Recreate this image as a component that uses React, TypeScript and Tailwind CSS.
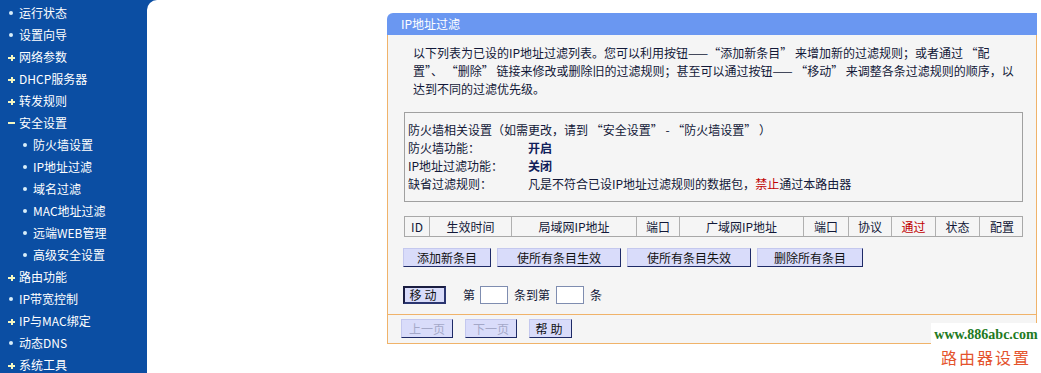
import type { ReactNode } from 'react'

type Mark = 'dot' | 'plus' | 'minus'

interface MenuItem {
  label: string
  mark: Mark
  sub?: boolean
}

const menu: MenuItem[] = [
  { label: '运行状态', mark: 'dot' },
  { label: '设置向导', mark: 'dot' },
  { label: '网络参数', mark: 'plus' },
  { label: 'DHCP服务器', mark: 'plus' },
  { label: '转发规则', mark: 'plus' },
  { label: '安全设置', mark: 'minus' },
  { label: '防火墙设置', mark: 'dot', sub: true },
  { label: 'IP地址过滤', mark: 'dot', sub: true },
  { label: '域名过滤', mark: 'dot', sub: true },
  { label: 'MAC地址过滤', mark: 'dot', sub: true },
  { label: '远端WEB管理', mark: 'dot', sub: true },
  { label: '高级安全设置', mark: 'dot', sub: true },
  { label: '路由功能', mark: 'plus' },
  { label: 'IP带宽控制', mark: 'dot' },
  { label: 'IP与MAC绑定', mark: 'plus' },
  { label: '动态DNS', mark: 'dot' },
  { label: '系统工具', mark: 'plus' },
]

// column widths of the rule table, they add up to the 619px box above it
const columns: { label: string; width: string; red?: boolean }[] = [
  { label: 'ID', width: 'w-[24px]' },
  { label: '生效时间', width: 'w-[82px]' },
  { label: '局域网IP地址', width: 'w-[125px]' },
  { label: '端口', width: 'w-[43px]' },
  { label: '广域网IP地址', width: 'w-[124px]' },
  { label: '端口', width: 'w-[45px]' },
  { label: '协议', width: 'w-[43px]' },
  { label: '通过', width: 'w-[44px]', red: true },
  { label: '状态', width: 'w-[44px]' },
  { label: '配置', width: 'w-[45px]' },
]

function Bullet({ mark }: { mark: Mark }) {
  if (mark === 'plus') {
    return (
      <span className="relative block h-[7px] w-[7px]">
        <span className="absolute left-0 top-[3px] h-[2px] w-[7px] bg-[#f4f6c0]" />
        <span className="absolute left-[2.5px] top-[1px] h-[6px] w-[2px] bg-[#f4f6c0]" />
      </span>
    )
  }
  if (mark === 'minus') {
    return <span className="block h-[2px] w-[7px] bg-[#f4f6c0]" />
  }
  return <span className="ml-[1px] block h-[4px] w-[4px] rounded-full bg-[#d8eefa]" />
}

function Sidebar() {
  return (
    <nav className="w-[147px] shrink-0 pt-[2px]">
      {menu.map((item) => (
        <div
          key={item.label}
          className={
            item.sub
              ? 'flex h-[22px] items-center pl-[22px] text-[12px] text-white'
              : 'flex h-[22px] items-center pl-[8px] text-[12px] text-white'
          }
        >
          <span className="flex w-[11px] items-center">
            <Bullet mark={item.mark} />
          </span>
          <span>{item.label}</span>
        </div>
      ))}
    </nav>
  )
}

function Btn({ children, width, disabled }: { children: ReactNode; width: string; disabled?: boolean }) {
  return (
    <button
      type="button"
      className={
        (disabled ? 'text-[#a4a8c8] ' : 'text-[#111] ') +
        width +
        ' h-[19px] border border-t-[#c4c8ee] border-l-[#c4c8ee] border-r-[#1e2a66] border-b-[#1e2a66] bg-[#d9dcfa] text-[12px] leading-[17px]'
      }
    >
      {children}
    </button>
  )
}

function SmallInput() {
  return <span className="block h-[18px] w-[28px] border border-[#7f8db0] bg-white" />
}

export default function App() {
  return (
    <div className="relative flex h-[373px] w-[1041px] overflow-hidden bg-[#0b4ea3] font-['Noto_Sans_CJK_SC',sans-serif]">
      <Sidebar />

      <main className="flex-1 rounded-tl-[10px] bg-white pl-[240px] pt-[13px]">
        <div className="w-[650px]">
          <div className="h-[22px] rounded-tl-[6px] bg-[#6a97f1] pl-[14px] text-[12px] leading-[22px] text-white">
            IP地址过滤
          </div>

          <div className="border-x border-b border-[#f0b36a] bg-[#f5f5f5] text-[12px] text-[#121838]">
            <p className="pl-[25px] pr-[10px] pt-[9px] leading-[18px]">
              以下列表为已设的IP地址过滤列表。您可以利用按钮——“添加新条目” 来增加新的过滤规则；或者通过 “配
              <br />
              置”、 “删除” 链接来修改或删除旧的过滤规则；甚至可以通过按钮—— “移动” 来调整各条过滤规则的顺序，以
              <br />
              达到不同的过滤优先级。
            </p>

            <div className="ml-[16px] mt-[14px] w-[619px] border border-[#a0a0a0] px-[3px] py-[8px] leading-[18px]">
              <div>防火墙相关设置（如需更改，请到 “安全设置” - “防火墙设置” ）</div>
              <div className="flex">
                <span className="w-[120px]">防火墙功能：</span>
                <span className="font-bold text-[#10205a]">开启</span>
              </div>
              <div className="flex">
                <span className="w-[120px]">IP地址过滤功能：</span>
                <span className="font-bold text-[#10205a]">关闭</span>
              </div>
              <div className="flex">
                <span className="w-[120px]">缺省过滤规则：</span>
                <span>
                  凡是不符合已设IP地址过滤规则的数据包，<span className="text-[#c00000]">禁止</span>通过本路由器
                </span>
              </div>
            </div>

            <div className="ml-[16px] mt-[14px] flex h-[21px] w-[619px] border border-[#a8a8a8]">
              {columns.map((c, i) => (
                <div
                  key={i}
                  className={
                    c.width +
                    (i > 0 ? ' border-l border-[#b0b0b0]' : '') +
                    (c.red ? ' text-[#c00000]' : '') +
                    ' shrink-0 text-center leading-[19px]'
                  }
                >
                  {c.label}
                </div>
              ))}
            </div>

            <div className="ml-[15px] mt-[11px] flex gap-[6px]">
              <Btn width="w-[88px]">添加新条目</Btn>
              <Btn width="w-[124px]">使所有条目生效</Btn>
              <Btn width="w-[124px]">使所有条目失效</Btn>
              <Btn width="w-[106px]">删除所有条目</Btn>
            </div>

            <div className="ml-[15px] mt-[19px] flex h-[18px] items-center">
              <button
                type="button"
                className="h-[18px] w-[43px] border-2 border-[#1a1d40] border-r-[#2a3570] border-b-[#2a3570] bg-[#d9dcfa] text-[12px] leading-[14px] tracking-[3px] text-[#111]"
              >
                移动
              </button>
              <span className="ml-[17px] mr-[5px]">第</span>
              <SmallInput />
              <span className="ml-[6px] mr-[6px]">条到第</span>
              <SmallInput />
              <span className="ml-[6px]">条</span>
            </div>

            <div className="mt-[10px] flex gap-[12px] border-t border-[#f0b36a] pb-[5px] pl-[13px] pt-[4px]">
              <Btn width="w-[52px]" disabled>
                上一页
              </Btn>
              <Btn width="w-[52px]" disabled>
                下一页
              </Btn>
              <Btn width="w-[43px]">
                <span className="tracking-[3px]">帮助</span>
              </Btn>
            </div>
          </div>
        </div>
      </main>

      <div className="absolute left-[931px] top-[323px] flex h-[50px] w-[110px] flex-col items-center bg-white pt-[3px]">
        <div className="font-['Liberation_Serif',serif] text-[14px] font-bold leading-[18px] text-[#227a22]">
          www.886abc.com
        </div>
        <div className="mt-[2px] text-[16px] leading-[22px] tracking-[2px] text-[#e4532c]">路由器设置</div>
      </div>
    </div>
  )
}
